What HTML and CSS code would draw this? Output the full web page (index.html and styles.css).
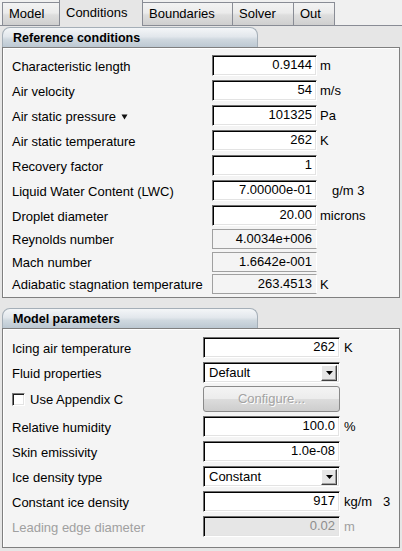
FILE: index.html
```html
<!DOCTYPE html>
<html>
<head>
<meta charset="utf-8">
<link rel="stylesheet" href="styles.css">
</head>
<body>
<div class="tabs">
  <div class="tab">Model</div>
  <div class="tab active">Conditions</div>
  <div class="tab">Boundaries</div>
  <div class="tab">Solver</div>
  <div class="tab">Out</div>
</div>
<div class="pane">
  <div class="group g1">
    <div class="ghead">Reference conditions</div>
    <div class="gbox">
      <div class="row"><span class="lbl">Characteristic length</span><span class="field">0.9144</span><span class="unit">m</span></div>
      <div class="row"><span class="lbl">Air velocity</span><span class="field">54</span><span class="unit">m/s</span></div>
      <div class="row"><span class="lbl">Air static pressure <svg class="tri" width="7" height="6" viewBox="0 0 7 6"><path d="M0.5 0.5H6.5L3.5 5.5Z" fill="#111"/></svg></span><span class="field">101325</span><span class="unit">Pa</span></div>
      <div class="row"><span class="lbl">Air static temperature</span><span class="field">262</span><span class="unit">K</span></div>
      <div class="row"><span class="lbl">Recovery factor</span><span class="field">1</span><span class="unit"></span></div>
      <div class="row"><span class="lbl">Liquid Water Content (LWC)</span><span class="field">7.00000e-01</span><span class="unit lwc">g/m 3</span></div>
      <div class="row"><span class="lbl">Droplet diameter</span><span class="field">20.00</span><span class="unit">microns</span></div>
      <div class="row ro r1"><span class="lbl">Reynolds number</span><span class="field rofield">4.0034e+006</span><span class="unit"></span></div>
      <div class="row ro r2"><span class="lbl">Mach number</span><span class="field rofield">1.6642e-001</span><span class="unit"></span></div>
      <div class="row ro r3"><span class="lbl">Adiabatic stagnation temperature</span><span class="field rofield">263.4513</span><span class="unit">K</span></div>
    </div>
  </div>
  <div class="group g2">
    <div class="ghead">Model parameters</div>
    <div class="gbox">
      <div class="row"><span class="lbl">Icing air temperature</span><span class="field">262</span><span class="unit">K</span></div>
      <div class="row selrow"><span class="lbl">Fluid properties</span><span class="field select"><span class="seltext">Default</span><span class="dd"><svg width="7" height="4" viewBox="0 0 7 4"><path d="M0 0H7L3.5 4Z" fill="#000"/></svg></span></span><span class="unit"></span></div>
      <div class="row btnrow"><span class="lbl"><span class="check"></span>Use Appendix C</span><span class="button">Configure...</span><span class="unit"></span></div>
      <div class="row"><span class="lbl">Relative humidity</span><span class="field">100.0</span><span class="unit">%</span></div>
      <div class="row"><span class="lbl">Skin emissivity</span><span class="field">1.0e-08</span><span class="unit"></span></div>
      <div class="row"><span class="lbl">Ice density type</span><span class="field select"><span class="seltext">Constant</span><span class="dd"><svg width="7" height="4" viewBox="0 0 7 4"><path d="M0 0H7L3.5 4Z" fill="#000"/></svg></span></span><span class="unit"></span></div>
      <div class="row"><span class="lbl">Constant ice density</span><span class="field">917</span><span class="unit">kg/m&nbsp;&nbsp;&nbsp;3</span></div>
      <div class="row disabled"><span class="lbl">Leading edge diameter</span><span class="field dis">0.02</span><span class="unit">m</span></div>
    </div>
  </div>
</div>
</body>
</html>
```
FILE: styles.css
```css
* { box-sizing: border-box; }
html, body { margin: 0; padding: 0; }
body {
  width: 402px;
  height: 551px;
  overflow: hidden;
  background: #e6e6e6;
  font-family: "Liberation Sans", Arial, sans-serif;
  font-size: 13px;
  color: #000;
}
.tabs {
  display: flex;
  align-items: flex-end;
  height: 26px;
  padding-left: 2px;
  background: #f0f0f0;
  border-bottom: 1px solid #898c95;
}
.tab {
  height: 23px;
  padding: 3px 0 0 6px;
  border: 1px solid #898c95;
  border-bottom: none;
  border-left: none;
  background: linear-gradient(#f3f3f3, #ebebeb 45%, #dddddd 55%, #cfcfcf);
}
.tab:first-child { border-left: 1px solid #898c95; }
.tab:nth-child(1) { width: 58px; }
.tab:nth-child(2) { width: 84px; }
.tab:nth-child(3) { width: 90px; }
.tab:nth-child(4) { width: 61px; }
.tab:nth-child(5) { width: 41px; }
.tab.active {
  height: 27px;
  margin-bottom: -1px;
  padding-top: 5px;
  background: #e6e6e6;
  border-left: 1px solid #898c95;
  margin-left: -1px;
}
.pane {
  padding: 0 2px 0 2px;
}
.ghead {
  width: 256px;
  height: 20px;
  margin-top: 1px;
  padding: 3px 0 0 10px;
  font-weight: bold;
  font-size: 12.5px;
  border: 1px solid #a5afb8;
  border-bottom: none;
  border-radius: 8px 8px 0 0;
  background: linear-gradient(#f4f6f8, #e2e7ec 45%, #cfd8df 60%, #bcc8d2);
}
.gbox {
  border: 1px solid #7f7f7f;
  background: #f4f4f4;
  box-shadow: inset 1px 1px 0 #fff;
}
.g1 .gbox { padding: 7px 0 3px 9px; }
.g2 { margin-top: 10px; }
.g2 .gbox { padding: 8px 0 10px 9px; height: 220px; }
.row {
  display: flex;
  align-items: center;
  height: 21px;
  margin-bottom: 4px;
}
.g1 .lbl { width: 200px; }
.g2 .lbl { width: 191px; }
.lbl {
  display: flex;
  align-items: center;
  white-space: nowrap;
  padding-top: 1px;
}
.tri { margin-left: 5px; margin-top: 1px; }
.field {
  height: 21px;
  padding: 0 4px 0 0;
  text-align: right;
  line-height: 18px;
  background: #fff;
  border-top: 1px solid #6d6d6d;
  border-left: 1px solid #6d6d6d;
  border-right: 1px solid #fff;
  border-bottom: 1px solid #fff;
  box-shadow: inset 1px 1px 0 #000, inset -1px -1px 0 #e3e3e3;
  white-space: nowrap;
}
.g1 .field { width: 105px; }
.g2 .field { width: 137px; }
.unit { margin-left: 3px; white-space: nowrap; }
.g2 .unit { margin-left: 4px; }
.unit.lwc { margin-left: 15px; }
.row.ro { height: 20px; margin-bottom: 0; }
.row.r1 { margin-top: -1px; }
.row.r2 { margin-top: 3px; }
.row.r3 { margin-top: 2px; }
.rofield {
  height: 20px;
  line-height: 18px;
  background: #f4f4f4;
  border: 1px solid #a0a0a0;
  border-right-color: #fff;
  box-shadow: none;
}
.select {
  display: flex;
  align-items: center;
  justify-content: space-between;
  text-align: left;
  padding: 0 2px 0 5px;
}
.dd {
  width: 16px;
  height: 16px;
  background: #e6e6e6;
  border-top: 1px solid #fff;
  border-left: 1px solid #fff;
  border-right: 1px solid #404040;
  border-bottom: 1px solid #404040;
  box-shadow: inset -1px -1px 0 #a0a0a0;
  display: flex;
  align-items: center;
  justify-content: center;
}
.selrow { margin-bottom: 3px; }
.btnrow { height: 26px; }
.check {
  width: 13px;
  height: 13px;
  margin: 0 5px 0 0;
  background: #fff;
  border-top: 1px solid #7a7a7a;
  border-left: 1px solid #7a7a7a;
  border-right: 1px solid #fff;
  border-bottom: 1px solid #fff;
  box-shadow: inset 1px 1px 0 #1c1c1c, inset -1px -1px 0 #e3e3e3;
}
.button {
  width: 137px;
  height: 26px;
  border: 1px solid #8a8a8a;
  border-radius: 3px;
  background: linear-gradient(#f4f4f4, #ececec 48%, #dcdcdc 52%, #cdcdcd);
  color: #a3a3a3;
  text-shadow: 1px 1px 0 #fff;
  text-align: center;
  line-height: 23px;
}
.disabled .lbl, .disabled .unit { color: #a0a0a0; }
.field.dis {
  background: #e6e6e6;
  color: #8d8d8d;
}
```
